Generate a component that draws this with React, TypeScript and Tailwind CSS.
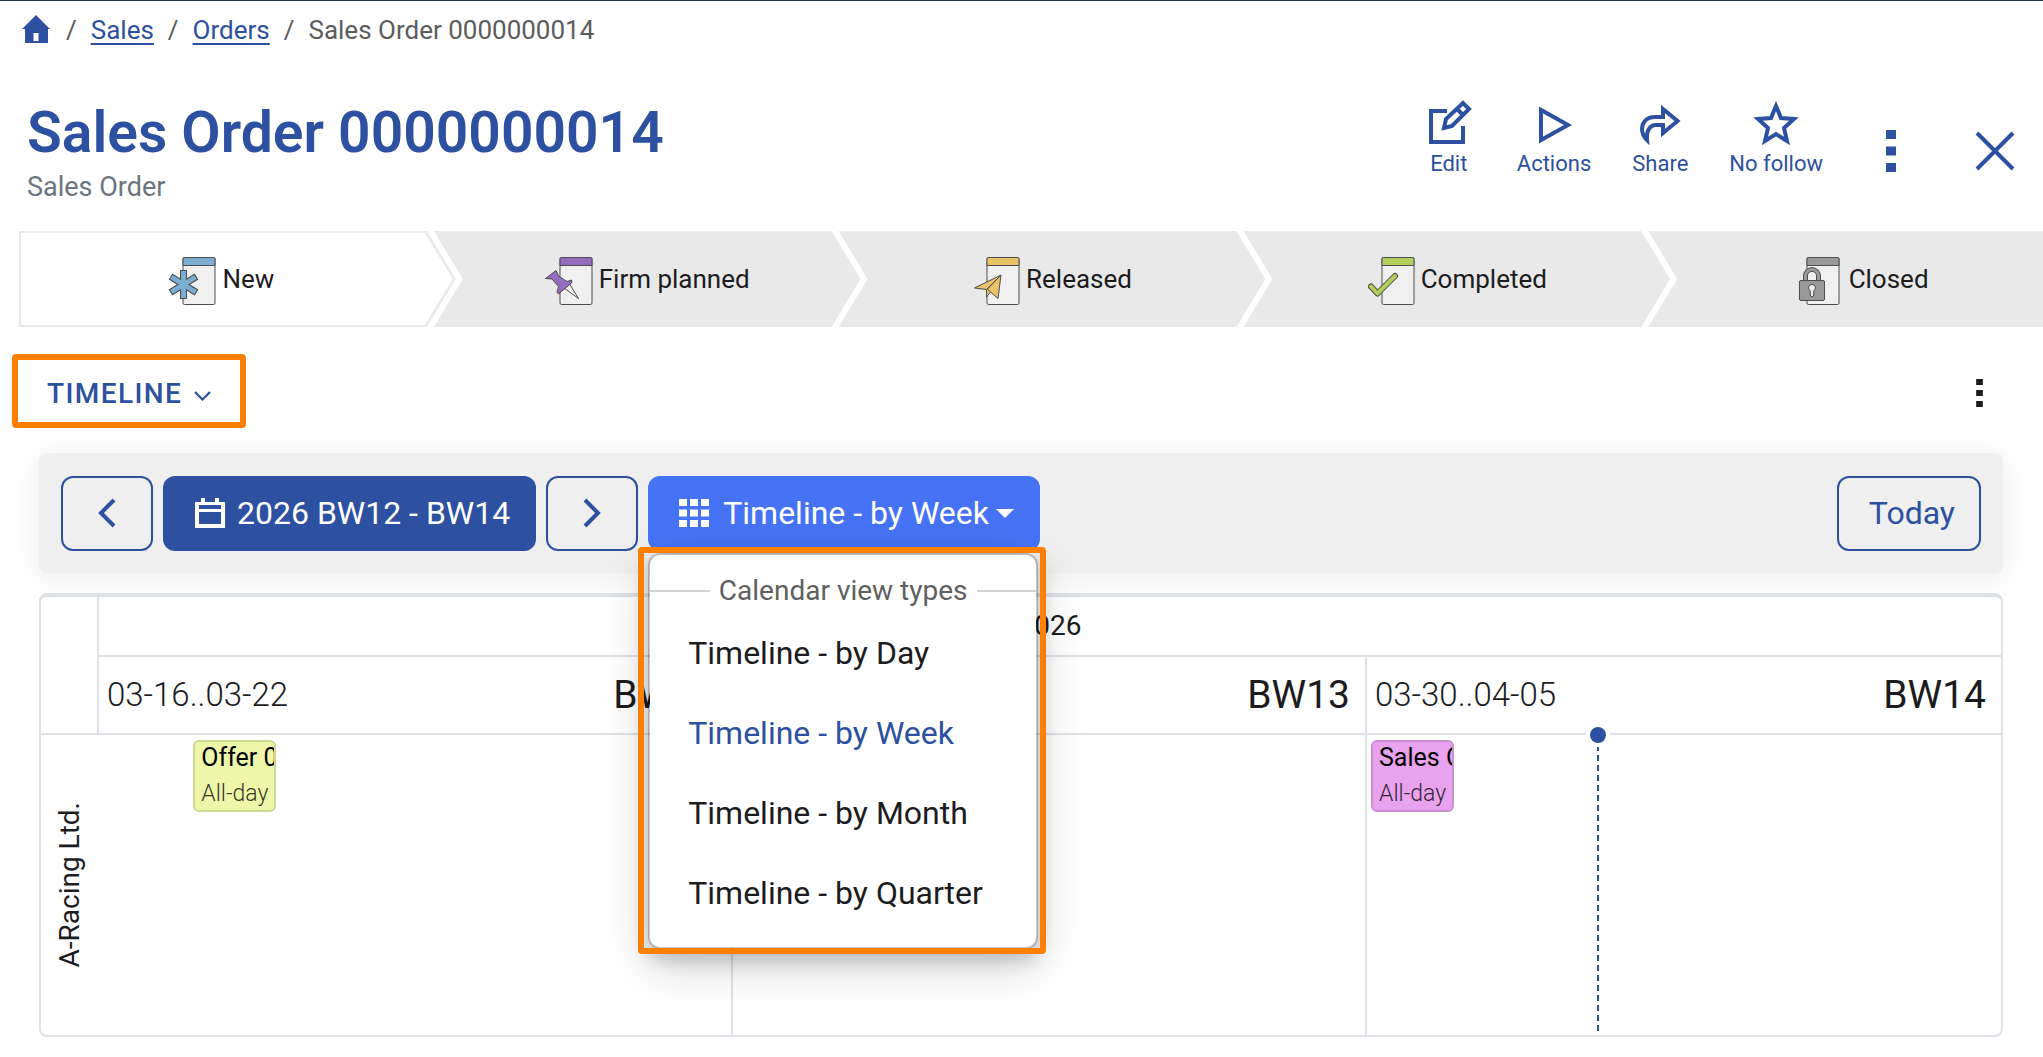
import type { ReactNode } from "react";

const STEPS = [
  {
    label: "New",
    icon: <NewIcon />,
    className: "basis-[437px] pr-8",
  },
  {
    label: "Firm planned",
    icon: <FirmPlannedIcon />,
    className: "basis-[427px] -ml-[22px]",
  },
  {
    label: "Released",
    icon: <ReleasedIcon />,
    className: "basis-[427px] -ml-[22px]",
  },
  {
    label: "Completed",
    icon: <CompletedIcon />,
    className: "basis-[427px] -ml-[22px]",
  },
  {
    label: "Closed",
    icon: <ClosedIcon />,
    className: "basis-[395px] -ml-[22px] pl-8",
  },
];

const VIEWS = [
  "Timeline - by Day",
  "Timeline - by Week",
  "Timeline - by Month",
  "Timeline - by Quarter",
];

const WEEKS = [
  { range: "03-16..03-22", name: "BW12" },
  { range: "03-23..03-29", name: "BW13" },
  { range: "03-30..04-05", name: "BW14" },
];

// Document sheet shared by all of the status icons
function Sheet({ color, x = 15, children }: { color: string; x?: number; children: ReactNode }) {
  return (
    <svg className="size-12 shrink-0 overflow-visible" viewBox="0 0 48 48" fill="none" aria-hidden="true">
      <rect x={x} y="0.5" width="32" height="47" rx="1.5" fill="#f0f0f0" stroke="#4d4d4d" />
      <path d={`M${x} 8.5V2a1.5 1.5 0 0 1 1.5-1.5h29A1.5 1.5 0 0 1 ${x + 32} 2v6.5z`} fill={color} stroke="#4d4d4d" />
      {children}
    </svg>
  );
}

function NewIcon() {
  return (
    <Sheet color="#7badd1">
      <path d="M15.5 13v29M2.5 19.5l26 16M28.5 19.5l-26 16" stroke="#4d4d4d" strokeWidth="7" />
      <path d="M15.5 14v27M3.4 20l24.2 15M27.6 20L3.4 35" stroke="#7badd1" strokeWidth="5" />
    </Sheet>
  );
}

function FirmPlannedIcon() {
  return (
    <Sheet color="#956cbf">
      <path d="M19 31l14.5 10.500L24 26z" fill="#f0f0f0" stroke="#4d4d4d" />
      <path
        d="M11 13.500l2.500 5.500 8.500 5.500 4.500-1.500.5 2.500L13.500 37 12 35l1.500-5.500L7 22l-6.500-.5z"
        fill="#956cbf"
        stroke="#4d4d4d"
      />
    </Sheet>
  );
}

function ReleasedIcon() {
  return (
    <Sheet color="#e8c368">
      <path d="M29 18L2.5 31l12 1.500V40l4-5 7.500 6.500z" fill="#e8c368" stroke="#4d4d4d" strokeLinejoin="round" />
      <path d="M29 18L14.500 32.500V40M29 18L15.500 32l3 3" stroke="#4d4d4d" />
    </Sheet>
  );
}

function CompletedIcon() {
  return (
    <Sheet color="#b5cf5c">
      <path d="M4 29.500l6.500 7L28 19" stroke="#4d4d4d" strokeWidth="6" strokeLinecap="round" strokeLinejoin="round" />
      <path d="M4 29.500l6.500 7L28 19" stroke="#b5cf5c" strokeWidth="4" strokeLinecap="round" strokeLinejoin="round" />
    </Sheet>
  );
}

function ClosedIcon() {
  return (
    <Sheet color="#999999" x={12}>
      <path d="M10.500 24v-5a6.500 6.500 0 0 1 13 0v5" stroke="#4d4d4d" strokeWidth="5" />
      <path d="M10.500 24v-5a6.500 6.500 0 0 1 13 0v5" stroke="#999999" strokeWidth="3" />
      <rect x="4.500" y="23.500" width="25" height="20" rx="1.500" fill="#999999" stroke="#4d4d4d" />
      <path d="M17 27.500a3.300 3.300 0 0 1 1.700 6.200V38a1.700 1.700 0 0 1-3.400 0v-4.300A3.300 3.300 0 0 1 17 27.500z" fill="#f0f0f0" stroke="#4d4d4d" />
    </Sheet>
  );
}

function Kebab({ className }: { className: string }) {
  return (
    <svg className={className} viewBox="0 0 10 42" fill="currentColor" aria-hidden="true">
      <path d="M0 0h10v9H0zM0 16.500h10v9H0zM0 33h10v9H0z" />
    </svg>
  );
}

function HeaderAction({ label, children }: { label: string; children: ReactNode }) {
  return (
    <button className="flex min-w-[54px] flex-col items-center gap-1">
      <svg className="size-12" viewBox="0 0 48 48" fill="none" stroke="currentColor" strokeWidth="4" aria-hidden="true">
        {children}
      </svg>
      <span className="text-[22px] leading-7">{label}</span>
    </button>
  );
}

function CalendarEvent({ title, className }: { title: string; className: string }) {
  return (
    <button
      className={`mx-1 mt-[5px] h-[72px] self-start overflow-hidden rounded-md border-2 pl-[6px] text-left whitespace-nowrap ${className}`}
    >
      <span className="block text-[25px] leading-8 text-black">{title}</span>
      <span className="block text-[23px] leading-10 font-light text-black/80">All-day</span>
    </button>
  );
}

function ViewMenu() {
  return (
    <div className="absolute top-full left-0 z-20 mt-[2px] w-[390px]">
      <div className="rounded-xl border-2 border-black/20 bg-white bg-clip-padding pt-[14px] pb-[14px] shadow-[0_16px_48px_rgba(0,0,0,0.18),0_10px_20px_rgba(0,0,0,0.2)]">
        <div className="flex items-center gap-[9px] text-[28px] leading-[44px] text-[#5f5f5f]">
          <span className="h-[2px] flex-1 bg-[#d4d4d4]" />
          Calendar view types
          <span className="h-[2px] flex-1 bg-[#d4d4d4]" />
        </div>
        <ul>
          {VIEWS.map((view) => (
            <li key={view}>
              <button
                className={`h-20 w-full pl-[38px] text-left text-[32px] ${
                  view === "Timeline - by Week" ? "text-[#2d50a0]" : "text-[#1c1c1e]"
                }`}
              >
                {view}
              </button>
            </li>
          ))}
        </ul>
      </div>
      <div className="pointer-events-none absolute -top-[6px] -right-2 -bottom-[5px] -left-[10px] rounded border-6 border-[#ff8000]" />
    </div>
  );
}

export default function App() {
  return (
    <div className="min-h-screen overflow-x-hidden border-t border-[#24344d] bg-white font-[Roboto,sans-serif] text-[#1c1c1e]">
      {/* Breadcrumb */}
      <nav className="flex items-center gap-[14px] pt-[11px] pl-[22px] text-[26px] leading-9 text-[#5c5c5c]">
        <a href="#home" aria-label="Home" className="mr-[2px] text-[#2d50a0]">
          <svg className="mb-[2px] h-7 w-7" viewBox="0 0 28 28" fill="currentColor" aria-hidden="true">
            <path fillRule="evenodd" d="M14 0l14 14h-2v14H3V14H0zM11.500 18v8h5v-8z" />
          </svg>
        </a>
        <span>/</span>
        <a href="#sales" className="text-[#2d50a0] underline underline-offset-4">Sales</a>
        <span>/</span>
        <a href="#orders" className="text-[#2d50a0] underline underline-offset-4">Orders</a>
        <span>/</span>
        <span>Sales Order 0000000014</span>
      </nav>

      {/* Title and actions */}
      <header className="flex items-start justify-between pt-12 pr-7 pl-[27px]">
        <div>
          <h1 className="text-[57px] leading-[73px] font-semibold text-[#2d50a0]">Sales Order 0000000014</h1>
          <p className="text-[27px] leading-9 text-[#6c757d]">Sales Order</p>
        </div>
        <div className="flex items-end pt-[2px] text-[#2d50a0]">
          <div className="mr-[63px] flex gap-[41px]">
            <HeaderAction label="Edit">
              <path d="M22 13H6v31h32V28M19 30l2-9L38 5l6 6-17 17zM32 11l6 6" />
            </HeaderAction>
            <HeaderAction label="Actions">
              <path d="M11 12v30l27-15z" />
            </HeaderAction>
            <HeaderAction label="Share">
              <path d="M27 11v8h-8C10 19 6 25 6 31c0 4 2 8 5 11-1-9 3-15 9-15h7v8l14.500-12z" />
            </HeaderAction>
            <HeaderAction label="No follow">
              <path d="M24 8l5 12 13 1-10 9 3 13-11-7-11 7 3-13L6 21l13-1z" />
            </HeaderAction>
          </div>
          <button aria-label="More" className="mr-[79px] flex h-[54px] items-center">
            <Kebab className="h-[42px] w-[10px]" />
          </button>
          <button aria-label="Close" className="flex h-[54px] items-center">
            <svg className="size-10" viewBox="0 0 40 40" stroke="currentColor" strokeWidth="4" aria-hidden="true">
              <path d="M2 2l36 36M38 2L2 38" />
            </svg>
          </button>
        </div>
      </header>

      {/* Status flow */}
      <ol className="mt-[26px] flex pl-[19px] text-[26px]">
        {STEPS.map((step, index) => (
          <li
            key={step.label}
            className={`relative flex h-24 grow items-center justify-center bg-[#e9e9e9] ${step.className} ${
              index === 0
                ? "[clip-path:polygon(0_0,calc(100%-29px)_0,100%_50%,calc(100%-29px)_100%,0_100%)]"
                : index === STEPS.length - 1
                  ? "[clip-path:polygon(0_0,100%_0,100%_100%,0_100%,29px_50%)]"
                  : "[clip-path:polygon(0_0,calc(100%-29px)_0,100%_50%,calc(100%-29px)_100%,0_100%,29px_50%)]"
            }`}
          >
            {index === 0 && (
              <span className="absolute inset-0 bg-white [clip-path:polygon(2px_2px,calc(100%-31px)_2px,calc(100%-3px)_50%,calc(100%-31px)_calc(100%-2px),2px_calc(100%-2px))]" />
            )}
            <span className="relative flex items-center gap-[6px] pt-1">
              {step.icon}
              <span className="pb-1 leading-9">{step.label}</span>
            </span>
          </li>
        ))}
      </ol>

      {/* Tab selector */}
      <div className="mt-[27px] flex items-center justify-between pr-[60px] pl-3">
        <button className="flex h-[74px] items-center gap-3 rounded border-6 border-[#ff8000] px-[29px] pt-[6px] text-[28px] font-medium tracking-wider text-[#2d50a0]">
          TIMELINE
          <svg className="mt-1 h-[10px] w-[17px]" viewBox="0 0 17 10" fill="none" stroke="currentColor" strokeWidth="2.2" aria-hidden="true">
            <path d="M1 1l7.500 7.500L16 1" />
          </svg>
        </button>
        <button aria-label="Timeline options" className="pt-1">
          <Kebab className="h-[28px] w-[7px]" />
        </button>
      </div>

      <main className="mt-[25px] mr-10 ml-[39px]">
        {/* Calendar toolbar */}
        <div className="flex h-[120px] items-center gap-[10px] rounded-lg bg-[#efefef] px-[22px] text-[32px] shadow-[0_4px_32px_rgba(0,0,0,0.08)]">
          <button aria-label="Previous" className="flex h-[75px] w-[92px] items-center justify-center rounded-xl border-2 border-[#2d50a0] text-[#2d50a0]">
            <svg className="h-[30px] w-[18px]" viewBox="0 0 18 30" fill="none" stroke="currentColor" strokeWidth="4" aria-hidden="true">
              <path d="M16 2L3 15l13 13" />
            </svg>
          </button>
          <button className="flex h-[75px] items-center gap-3 rounded-xl bg-[#2d50a0] pr-[26px] pl-8 text-white">
            <svg className="h-[30px] w-[30px]" viewBox="0 0 30 30" fill="currentColor" aria-hidden="true">
              <path fillRule="evenodd" d="M6 0h4v4h10V0h4v4h6v26H0V4h6zM4 7v4h22V7zM4 14v12h22V14z" />
            </svg>
            2026 BW12 - BW14
          </button>
          <button aria-label="Next" className="flex h-[75px] w-[92px] items-center justify-center rounded-xl border-2 border-[#2d50a0] text-[#2d50a0]">
            <svg className="h-[30px] w-[18px]" viewBox="0 0 18 30" fill="none" stroke="currentColor" strokeWidth="4" aria-hidden="true">
              <path d="M2 2l13 13L2 28" />
            </svg>
          </button>
          <div className="relative">
            <button aria-expanded="true" className="flex h-[75px] items-center rounded-xl bg-[#4673f5] pr-[26px] pl-[31px] text-white">
              <svg className="mr-[14px] h-7 w-[30px]" viewBox="0 0 30 28" fill="currentColor" aria-hidden="true">
                <path d="M0 0h8v7H0zM11 0h8v7h-8zM22 0h8v7h-8zM0 10.500h8v7H0zM11 10.500h8v7h-8zM22 10.500h8v7h-8zM0 21h8v7H0zM11 21h8v7h-8zM22 21h8v7h-8z" />
              </svg>
              Timeline - by Week
              <svg className="ml-[7px] h-[9px] w-[18px]" viewBox="0 0 18 9" fill="currentColor" aria-hidden="true">
                <path d="M0 0h18L9 9z" />
              </svg>
            </button>
            <ViewMenu />
          </div>
          <button className="ml-auto h-[75px] rounded-xl border-2 border-[#2d50a0] pr-6 pl-[30px] text-[#2d50a0]">Today</button>
        </div>

        {/* Timeline grid */}
        <div className="mt-5 rounded-lg border-2 border-t-4 border-[#dee2e6]">
          <div className="flex">
            <div className="w-[58px] shrink-0 border-r-2 border-[#dee2e6]" />
            <div className="flex-1">
              <div className="flex h-[60px] items-center justify-center border-b-2 border-[#dee2e6] text-[28px]">2026</div>
              <div className="grid h-[76px] grid-cols-3">
                {WEEKS.map((week) => (
                  <div key={week.name} className="flex items-center justify-between border-r-2 border-[#dee2e6] pr-[15px] pl-2 last:border-r-0">
                    <span className="text-[33px] font-light">{week.range}</span>
                    <span className="text-[39px]">{week.name}</span>
                  </div>
                ))}
              </div>
            </div>
          </div>
          <div className="flex h-[302px] border-t-2 border-[#dee2e6]">
            <div className="flex w-[58px] shrink-0 items-center justify-center">
              <span className="rotate-180 text-[28px] whitespace-nowrap [writing-mode:vertical-rl]">A-Racing Ltd.</span>
            </div>
            <div className="grid flex-1 grid-cols-3">
              <div className="grid grid-cols-7 border-r-2 border-[#dee2e6]">
                <CalendarEvent title="Offer 0" className="col-start-2 border-[#cfd794] bg-[#edf6a9]" />
              </div>
              <div className="border-r-2 border-[#dee2e6]" />
              <div className="relative grid grid-cols-7">
                <CalendarEvent title="Sales O" className="col-start-1 border-[#cc8fd1] bg-[#e9a2ee]" />
                {/* Current time marker */}
                <div className="absolute -top-3 bottom-0 left-[36.4%] flex w-6 -translate-x-1/2 flex-col items-center">
                  <span className="size-6 shrink-0 rounded-full border-4 border-white bg-[#2d50a0]" />
                  <span className="w-[2px] flex-1 bg-[repeating-linear-gradient(to_bottom,#2d50a0_0_4px,transparent_4px_8px,#2d50a0_8px_10px)]" />
                </div>
              </div>
            </div>
          </div>
        </div>
      </main>
    </div>
  );
}
